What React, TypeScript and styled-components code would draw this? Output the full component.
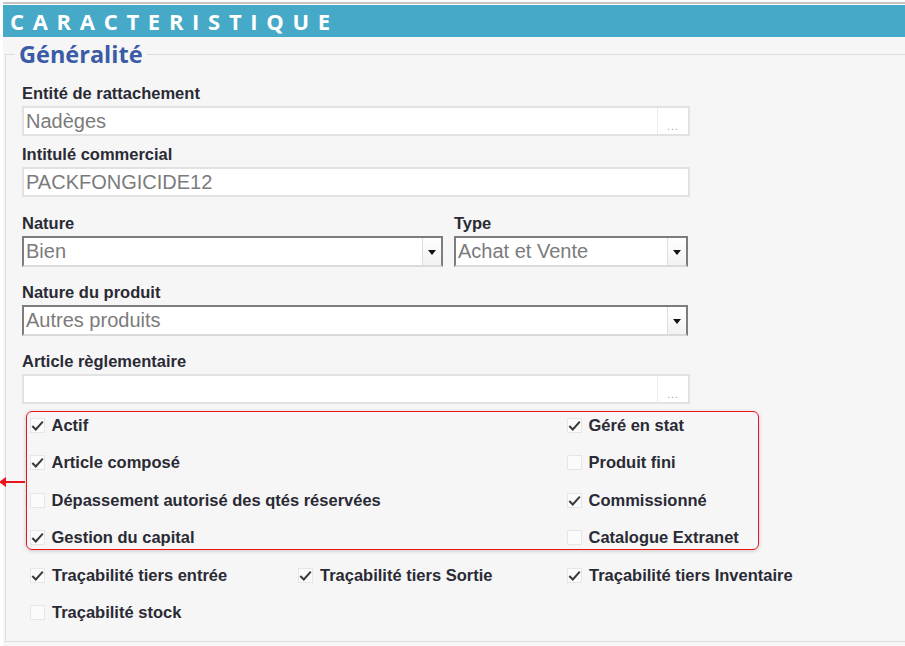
import React from 'react';
import styled, { createGlobalStyle } from 'styled-components';

const GlobalStyle = createGlobalStyle`
  html, body {
    margin: 0;
    padding: 0;
    background: #ffffff;
  }
  * {
    box-sizing: border-box;
  }
`;

const Page = styled.div`
  width: 905px;
  height: 646px;
  overflow: hidden;
  padding: 2px 0 0 3px;
`;

const TopRule = styled.div`
  border-top: 2px solid #c4c4c4;
  padding-top: 1px;
`;

const Header = styled.div`
  height: 32px;
  background: #47a9c8;
  display: flex;
  align-items: center;
  padding-left: 7px;
  font-family: 'Open Sans', 'DejaVu Sans', sans-serif;
  font-weight: 700;
  font-size: 22px;
  letter-spacing: 8.7px;
  color: #ffffff;
`;

const Body = styled.div`
  background: #f6f6f6;
  padding: 2px 0 6px 0;
`;

const Fieldset = styled.fieldset`
  margin: 0 0 0 2px;
  padding: 0;
  border: 1px solid #dcdcdc;
  border-right: none;
`;

const Legend = styled.legend`
  margin-left: 9px;
  padding: 0 4px;
  font-family: 'Open Sans', 'DejaVu Sans', sans-serif;
  font-weight: 700;
  font-size: 23.5px;
  line-height: 30px;
  color: #3b5ba7;
`;

const Content = styled.div`
  padding: 14px 0 17px 16px;
`;

const Field = styled.div<{ $top: number; $width?: number }>`
  margin-top: ${p => p.$top}px;
  width: ${p => (p.$width ? `${p.$width}px` : 'auto')};
  display: flex;
  flex-direction: column;
  gap: 3px;
`;

const Label = styled.div`
  font-family: 'Liberation Sans', Arial, sans-serif;
  font-weight: 700;
  font-size: 16.5px;
  line-height: 20px;
  color: #2a2a35;
`;

const TextBox = styled.div<{ $width: number }>`
  width: ${p => p.$width}px;
  height: 30px;
  background: #ffffff;
  border: 2px solid #e2e2e2;
  display: flex;
  align-items: center;
  font-family: 'Liberation Sans', Arial, sans-serif;
  font-size: 20px;
  color: #7b7b7b;
`;

const BoxText = styled.span`
  flex: 1;
  padding-left: 2px;
  white-space: nowrap;
`;

const EllipsisBtn = styled.div`
  width: 31px;
  align-self: stretch;
  border-left: 1px solid #ececec;
  display: flex;
  align-items: flex-end;
  justify-content: center;
  font-size: 10px;
  line-height: 10px;
  letter-spacing: 1px;
  color: #8a9cb0;
  padding-bottom: 2px;
`;

const SelectBox = styled.div<{ $width: number }>`
  width: ${p => p.$width}px;
  height: 31px;
  background: #ffffff;
  border: 2px solid;
  border-color: #7d7d7d #7d7d7d #dadada #7d7d7d;
  display: flex;
  align-items: center;
  font-family: 'Liberation Sans', Arial, sans-serif;
  font-size: 20px;
  color: #7b7b7b;
`;

const ArrowBtn = styled.div`
  width: 19px;
  align-self: stretch;
  border-left: 1px solid #dedede;
  background: linear-gradient(#ffffff, #f2f2f2);
  display: flex;
  align-items: center;
  justify-content: center;
`;

const Arrow = styled.span`
  width: 0;
  height: 0;
  border-left: 4px solid transparent;
  border-right: 4px solid transparent;
  border-top: 5px solid #111;
  margin-top: 2px;
`;

const Row = styled.div<{ $top: number }>`
  display: flex;
  gap: 11px;
  margin-top: ${p => p.$top}px;
`;

const Highlight = styled.div`
  position: relative;
  margin: 7px 0 0 4px;
  width: 733px;
  border: 1.5px solid #e8151b;
  border-radius: 6px;
  box-shadow: 0 1px 4px rgba(0, 0, 0, 0.18);
  padding: 2px 0 0 2.5px;
  display: grid;
  grid-template-columns: 537px auto;
  row-gap: 15.5px;
`;

const Pointer = styled.div`
  position: absolute;
  left: -26px;
  top: 69px;
  width: 24px;
  height: 2px;
  background: #e8151b;
  &::before {
    content: '';
    position: absolute;
    left: -2px;
    top: -4px;
    border-top: 5px solid transparent;
    border-bottom: 5px solid transparent;
    border-right: 7px solid #e8151b;
  }
`;

const CheckGrid = styled.div`
  margin: 15px 0 0 8px;
  display: grid;
  grid-template-columns: 268px 269px auto;
  row-gap: 15px;
`;

const CheckItem = styled.label`
  display: flex;
  align-items: center;
  gap: 7px;
  height: 22px;
  font-family: 'Liberation Sans', Arial, sans-serif;
  font-weight: 700;
  font-size: 16.5px;
  color: #2a2a35;
  white-space: nowrap;
`;

const Box = styled.span`
  width: 15px;
  height: 15px;
  background: #fbfbfb;
  border: 1px solid #e6e6e6;
  display: flex;
  align-items: center;
  justify-content: center;
`;

const Check = ({ checked, label }: { checked: boolean; label: string }) => (
  <CheckItem>
    <Box>
      {checked && (
        <svg width="13" height="13" viewBox="0 0 13 13">
          <path d="M1.3 7 L4.8 10.5 L11.8 2.6" fill="none" stroke="#3a3a3a" strokeWidth="2" />
        </svg>
      )}
    </Box>
    {label}
  </CheckItem>
);

export default function App() {
  return (
    <Page>
      <GlobalStyle />
      <TopRule>
        <Header>CARACTERISTIQUE</Header>
      </TopRule>
      <Body>
        <Fieldset>
          <Legend>Généralité</Legend>
          <Content>
            <Field $top={0}>
              <Label>Entité de rattachement</Label>
              <TextBox $width={668}>
                <BoxText>Nadèges</BoxText>
                <EllipsisBtn>...</EllipsisBtn>
              </TextBox>
            </Field>
            <Field $top={8}>
              <Label>Intitulé commercial</Label>
              <TextBox $width={668}>
                <BoxText>PACKFONGICIDE12</BoxText>
              </TextBox>
            </Field>
            <Row $top={16}>
              <Field $top={0} $width={421}>
                <Label>Nature</Label>
                <SelectBox $width={421}>
                  <BoxText>Bien</BoxText>
                  <ArrowBtn><Arrow /></ArrowBtn>
                </SelectBox>
              </Field>
              <Field $top={0} $width={234}>
                <Label>Type</Label>
                <SelectBox $width={234}>
                  <BoxText>Achat et Vente</BoxText>
                  <ArrowBtn><Arrow /></ArrowBtn>
                </SelectBox>
              </Field>
            </Row>
            <Field $top={15}>
              <Label>Nature du produit</Label>
              <SelectBox $width={666}>
                <BoxText>Autres produits</BoxText>
                <ArrowBtn><Arrow /></ArrowBtn>
              </SelectBox>
            </Field>
            <Field $top={15}>
              <Label>Article règlementaire</Label>
              <TextBox $width={668}>
                <BoxText />
                <EllipsisBtn>...</EllipsisBtn>
              </TextBox>
            </Field>
            <Highlight>
              <Pointer />
              <Check checked label="Actif" />
              <Check checked label="Géré en stat" />
              <Check checked label="Article composé" />
              <Check checked={false} label="Produit fini" />
              <Check checked={false} label="Dépassement autorisé des qtés réservées" />
              <Check checked label="Commissionné" />
              <Check checked label="Gestion du capital" />
              <Check checked={false} label="Catalogue Extranet" />
            </Highlight>
            <CheckGrid>
              <Check checked label="Traçabilité tiers entrée" />
              <Check checked label="Traçabilité tiers Sortie" />
              <Check checked label="Traçabilité tiers Inventaire" />
              <Check checked={false} label="Traçabilité stock" />
            </CheckGrid>
          </Content>
        </Fieldset>
      </Body>
    </Page>
  );
}
